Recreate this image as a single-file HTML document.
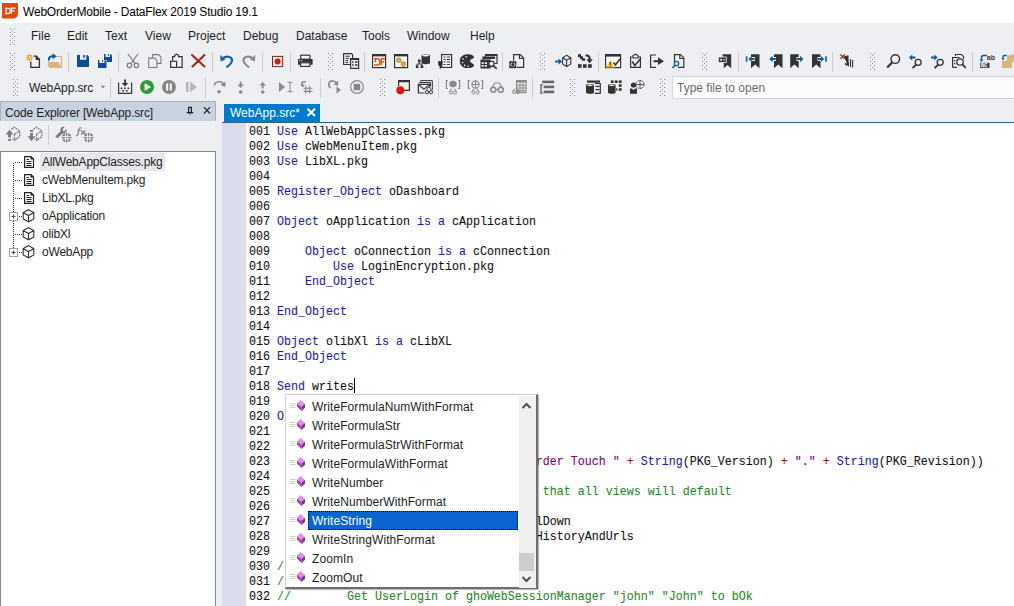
<!DOCTYPE html>
<html><head><meta charset="utf-8">
<style>
*{margin:0;padding:0;box-sizing:border-box}
html,body{width:1014px;height:606px;overflow:hidden;background:#eeeff3;font-family:"Liberation Sans",sans-serif;font-size:12px;color:#1e1e1e;position:relative}
.a{position:absolute}
.nw{white-space:nowrap}
#title{left:0;top:0;width:1014px;height:23px;background:#fff}
#title .t{left:23px;top:5px;font-size:12px;color:#000;letter-spacing:-0.2px}
.menu span{position:absolute;top:29px;font-size:12px;color:#1e1e1e;white-space:nowrap}
#combo{left:29px;top:81px;font-size:12px;color:#1e1e1e;white-space:nowrap;letter-spacing:-0.1px}
#cehdr{left:0;top:101px;width:216px;height:20px;background:#c9d3e0;border-top:1px solid #a8b0bc;border-right:1px solid #a8b0bc;border-left:1px solid #a8b0bc}
#cehdr .t{left:4px;top:4px;font-size:12px;color:#1e1e1e;letter-spacing:-0.15px}
#tree{left:0;top:151px;width:216px;height:460px;background:#fff;border:1px solid #838790}
.ti{position:absolute;left:42px;font-size:12px;color:#1e1e1e;white-space:nowrap;letter-spacing:-0.2px}
#tsel{left:40px;top:153px;width:125px;height:18px;background:#e8e8ec}
#tab{left:224px;top:104px;width:96px;height:18px;background:#007acc;color:#fff}
#tab .t{left:6px;top:2px;font-size:12px;white-space:nowrap}
#tabline{left:222px;top:122px;width:792px;height:1px;background:#2d6488}
#editor{left:222px;top:123px;width:792px;height:483px;background:#fff}
#gutter{left:222px;top:123px;width:24px;height:483px;background:#dadcec}
#code{left:249px;top:125px;font-family:"Liberation Mono",monospace;font-size:12.4px;line-height:15px;white-space:pre;color:#111;transform-origin:0 0;transform:scaleX(0.9409);-webkit-text-stroke:0.1px}
.k{color:#1e1ea0}.s{color:#800080}.c{color:#1f8a1f}.o{color:#a01010}
#caret{left:354px;top:378px;width:1px;height:15px;background:#000}
#popup{left:285px;top:394px;width:253px;height:195px;background:#fff;border:1px solid #d0d0d0;border-right:2px solid #6e6e6e;border-bottom:2px solid #6e6e6e;box-shadow:1px 1px 1px rgba(0,0,0,.25);z-index:5}
.pi{position:absolute;left:26px;font-size:12px;color:#1e1e1e;white-space:nowrap;letter-spacing:0.08px}
#sel{left:22px;top:116px;width:210px;height:19px;background:#0a64d2;border:1px dotted #000}
#sb{left:233px;top:1px;width:17px;height:192px;background:#f0f0f0}
#thumb{left:0px;top:157px;width:15px;height:18px;background:#cdcdcd}
#typebox{left:672px;top:76px;width:350px;height:23px;background:#fcfcfc;border:1px solid #d8d9de}
#typebox .t{left:4px;top:4px;color:#6d6d6d;font-size:12px}
</style></head><body>
<div id="title" class="a"><div class="t a nw">WebOrderMobile - DataFlex 2019 Studio 19.1</div></div>

<div class="menu">
<span style="left:31px">File</span>
<span style="left:67px">Edit</span>
<span style="left:105px">Text</span>
<span style="left:145px">View</span>
<span style="left:188px">Project</span>
<span style="left:243px">Debug</span>
<span style="left:296px">Database</span>
<span style="left:362px">Tools</span>
<span style="left:407px">Window</span>
<span style="left:470px">Help</span>
</div>
<div id="combo" class="a">WebApp.src</div>

<div id="cehdr" class="a"><div class="t a nw">Code Explorer [WebApp.src]</div></div>
<div id="tree" class="a"></div>
<div id="tsel" class="a"></div>
<div class="ti" style="top:155px">AllWebAppClasses.pkg</div>
<div class="ti" style="top:173px">cWebMenuItem.pkg</div>
<div class="ti" style="top:191px">LibXL.pkg</div>
<div class="ti" style="top:209px">oApplication</div>
<div class="ti" style="top:227px">olibXl</div>
<div class="ti" style="top:245px">oWebApp</div>

<div id="editor" class="a"></div>
<div id="gutter" class="a"></div>
<div id="tabline" class="a"></div>
<div id="tab" class="a"><div class="t a">WebApp.src*</div></div>

<div id="typebox" class="a"><div class="t a nw">Type file to open</div></div>

<div id="code" class="a">001 <span class="k">Use</span> AllWebAppClasses.pkg
002 <span class="k">Use</span> cWebMenuItem.pkg
003 <span class="k">Use</span> LibXL.pkg
004
005 <span class="k">Register_Object</span> oDashboard
006
007 <span class="k">Object</span> oApplication <span class="k">is a</span> cApplication
008
009     <span class="k">Object</span> oConnection <span class="k">is a</span> cConnection
010         <span class="k">Use</span> LoginEncryption.pkg
011     <span class="k">End_Object</span>
012
013 <span class="k">End_Object</span>
014
015 <span class="k">Object</span> olibXl <span class="k">is a</span> cLibXL
016 <span class="k">End_Object</span>
017
018 <span class="k">Send</span> writes
019
020 <span class="k">O</span>
021
022
023                                      <span class="s">rder Touch "</span> <span class="o">+</span> <span class="k">String</span>(PKG_Version) <span class="o">+</span> <span class="s">"."</span> <span class="o">+</span> <span class="k">String</span>(PKG_Revision))
024
025                                       <span class="c">that all views will default</span>
026
027                                      lDown
028                                      HistoryAndUrls
029
030 <span class="c">//</span>
031 <span class="c">//</span>
032 <span class="c">//        Get UserLogin of ghoWebSessionManager "john" "John" to bOk</span>
</div>
<div id="caret" class="a"></div>

<svg class="a" style="left:0;top:0" width="1014" height="606" viewBox="0 0 1014 606"><g fill="#8a8a8a"><rect x="10" y="53" width="1" height="1"/><rect x="14" y="53" width="1" height="1"/><rect x="12" y="55" width="1" height="1"/><rect x="10" y="57" width="1" height="1"/><rect x="14" y="57" width="1" height="1"/><rect x="12" y="59" width="1" height="1"/><rect x="10" y="61" width="1" height="1"/><rect x="14" y="61" width="1" height="1"/><rect x="12" y="63" width="1" height="1"/><rect x="10" y="65" width="1" height="1"/><rect x="14" y="65" width="1" height="1"/><rect x="12" y="67" width="1" height="1"/><rect x="10" y="69" width="1" height="1"/><rect x="14" y="69" width="1" height="1"/></g><g fill="#8a8a8a"><rect x="10" y="28" width="1" height="1"/><rect x="14" y="28" width="1" height="1"/><rect x="12" y="30" width="1" height="1"/><rect x="10" y="32" width="1" height="1"/><rect x="14" y="32" width="1" height="1"/><rect x="12" y="34" width="1" height="1"/><rect x="10" y="36" width="1" height="1"/><rect x="14" y="36" width="1" height="1"/><rect x="12" y="38" width="1" height="1"/><rect x="10" y="40" width="1" height="1"/><rect x="14" y="40" width="1" height="1"/><rect x="12" y="42" width="1" height="1"/><rect x="10" y="44" width="1" height="1"/><rect x="14" y="44" width="1" height="1"/></g><rect x="68" y="52" width="1" height="20" fill="#ccced3"/><rect x="118" y="52" width="1" height="20" fill="#ccced3"/><rect x="212" y="52" width="1" height="20" fill="#ccced3"/><rect x="262" y="52" width="1" height="20" fill="#ccced3"/><rect x="290" y="52" width="1" height="20" fill="#ccced3"/><rect x="364" y="52" width="1" height="20" fill="#ccced3"/><rect x="502" y="52" width="1" height="20" fill="#ccced3"/><rect x="598" y="52" width="1" height="20" fill="#ccced3"/><rect x="738" y="52" width="1" height="20" fill="#ccced3"/><rect x="832" y="52" width="1" height="20" fill="#ccced3"/><rect x="972" y="52" width="1" height="20" fill="#ccced3"/><g fill="#8a8a8a"><rect x="328" y="53" width="1" height="1"/><rect x="332" y="53" width="1" height="1"/><rect x="330" y="55" width="1" height="1"/><rect x="328" y="57" width="1" height="1"/><rect x="332" y="57" width="1" height="1"/><rect x="330" y="59" width="1" height="1"/><rect x="328" y="61" width="1" height="1"/><rect x="332" y="61" width="1" height="1"/><rect x="330" y="63" width="1" height="1"/><rect x="328" y="65" width="1" height="1"/><rect x="332" y="65" width="1" height="1"/><rect x="330" y="67" width="1" height="1"/><rect x="328" y="69" width="1" height="1"/><rect x="332" y="69" width="1" height="1"/></g><g fill="#8a8a8a"><rect x="540" y="53" width="1" height="1"/><rect x="544" y="53" width="1" height="1"/><rect x="542" y="55" width="1" height="1"/><rect x="540" y="57" width="1" height="1"/><rect x="544" y="57" width="1" height="1"/><rect x="542" y="59" width="1" height="1"/><rect x="540" y="61" width="1" height="1"/><rect x="544" y="61" width="1" height="1"/><rect x="542" y="63" width="1" height="1"/><rect x="540" y="65" width="1" height="1"/><rect x="544" y="65" width="1" height="1"/><rect x="542" y="67" width="1" height="1"/><rect x="540" y="69" width="1" height="1"/><rect x="544" y="69" width="1" height="1"/></g><g fill="#8a8a8a"><rect x="702" y="53" width="1" height="1"/><rect x="706" y="53" width="1" height="1"/><rect x="704" y="55" width="1" height="1"/><rect x="702" y="57" width="1" height="1"/><rect x="706" y="57" width="1" height="1"/><rect x="704" y="59" width="1" height="1"/><rect x="702" y="61" width="1" height="1"/><rect x="706" y="61" width="1" height="1"/><rect x="704" y="63" width="1" height="1"/><rect x="702" y="65" width="1" height="1"/><rect x="706" y="65" width="1" height="1"/><rect x="704" y="67" width="1" height="1"/><rect x="702" y="69" width="1" height="1"/><rect x="706" y="69" width="1" height="1"/></g><g fill="#8a8a8a"><rect x="870" y="53" width="1" height="1"/><rect x="874" y="53" width="1" height="1"/><rect x="872" y="55" width="1" height="1"/><rect x="870" y="57" width="1" height="1"/><rect x="874" y="57" width="1" height="1"/><rect x="872" y="59" width="1" height="1"/><rect x="870" y="61" width="1" height="1"/><rect x="874" y="61" width="1" height="1"/><rect x="872" y="63" width="1" height="1"/><rect x="870" y="65" width="1" height="1"/><rect x="874" y="65" width="1" height="1"/><rect x="872" y="67" width="1" height="1"/><rect x="870" y="69" width="1" height="1"/><rect x="874" y="69" width="1" height="1"/></g><g stroke="#e39a1f" stroke-width="1.1"><path d="M29.5 54v7M26 57.5h7M27 55l5 5M32 55l-5 5"/></g><circle cx="29.5" cy="57.5" r="1.4" fill="#fff" stroke="#e39a1f"/><path d="M30.8 61.5V67.4H39.4V59.2L36.4 56.2H33.5" fill="none" stroke="#333" stroke-width="1.3"/><path d="M35.7 55.6L40 59.9H35.7Z" fill="#333"/><path d="M56 56.5H61.5V67.5" fill="none" stroke="#d9b57a" stroke-width="1.2"/><path d="M48 62H58.5L62 68H49.5Z" fill="#d9b57a"/><path d="M48.5 67V61" stroke="#d9b57a" stroke-width="1"/><path d="M49.3 60.5C48 57.5 50 56 53.5 56.2" fill="none" stroke="#0e5aa0" stroke-width="2"/><path d="M52.5 53.2L56.8 56.2L52.5 59.2Z" fill="#0e5aa0"/><path d="M77 55H80V59.7H86.3V55H87.2L89 56.8V67H77Z" fill="#0b4c94"/><rect x="83.2" y="55" width="1.6" height="2.8" fill="#0b4c94"/><path d="M98 60H99.4V63H104.5V60H105L106.5 61.5V68H98Z" fill="#0b4c94"/><rect x="102" y="60" width="1" height="2" fill="#0b4c94"/><path d="M104 54H105.5V57H110V54H110.5L112 55.5V62H106.8V60H104Z" fill="#0b4c94"/><rect x="107.8" y="54" width="1" height="2" fill="#0b4c94"/><g fill="none" stroke="#7c7c7c" stroke-width="1.2"><circle cx="129.4" cy="65.4" r="2.2"/><circle cx="136.4" cy="65.4" r="2.2"/><path d="M128 54L135 63.4M138 54L131 63.4"/></g><g fill="none" stroke="#7c7c7c" stroke-width="1.1"><path d="M152.6 57.5V54.6H158.6L161 57V63.4H157"/><path d="M148.7 58.1H154.6L156.9 60.4V67.5H148.7Z" fill="#eeeff3"/></g><g fill="none" stroke="#333" stroke-width="1.2"><path d="M172.6 60.5V56.7H174.6V55.3L176.6 54.2L178.6 55.3V56.7H182.1V67.4H177.5"/><rect x="170.6" y="61.3" width="6" height="6.1" fill="#eeeff3"/></g><g stroke="#a3270f" stroke-width="2.1" stroke-linecap="round"><path d="M192 55L204.5 66.5M204.5 55L192.5 66.5"/></g><path d="M222 58.6C226 55.8 231.5 56 232 60C232.4 63 229.5 65 226.5 67.3" fill="none" stroke="#1a5ea8" stroke-width="2.2"/><path d="M220.2 55L220.6 61.5L225.6 59.4Z" fill="#1a5ea8"/><path d="M253.5 58.6C249.5 55.8 244 56 243.5 60C243.1 63 246 65 249 67.3" fill="none" stroke="#8a8a8a" stroke-width="2.2"/><path d="M255.3 55L254.9 61.5L249.9 59.4Z" fill="#8a8a8a"/><rect x="272.5" y="56.4" width="10.2" height="10.2" fill="#fbe5df" stroke="#7a2a1a" stroke-width="1"/><circle cx="277.6" cy="61.5" r="3" fill="#b02a10"/><rect x="300.7" y="55.2" width="9.2" height="4" fill="#fff" stroke="#333" stroke-width="1.2"/><path d="M298 59H312.6V64.8H310.2V62.4H300.4V64.8H298Z" fill="#333"/><rect x="300.7" y="62.8" width="9.2" height="3.6" fill="#fff" stroke="#333" stroke-width="1.2"/><rect x="299.2" y="60.2" width="1.2" height="1" fill="#fff"/><rect x="301.2" y="60.2" width="1.2" height="1" fill="#fff"/><g fill="none" stroke="#333" stroke-width="1.2"><path d="M350 64.5H343.6V53.6H351.5L352.6 54.7V58"/><path d="M345.5 56.2H350M345.5 58.4H349M345.5 60.6H348M345.5 62.6H348" stroke-width="1"/></g><rect x="350.6" y="58.6" width="8" height="9.8" fill="#eeeff3" stroke="#333" stroke-width="1.2"/><rect x="350" y="58" width="9" height="2" fill="#333"/><path d="M352 62h1.5M355 62h2.5M352 65h1.5M355 65h2.5" stroke="#333" stroke-width="1.6"/><rect x="372.6" y="54.6" width="13" height="13" fill="#fff" stroke="#333" stroke-width="1.2"/><rect x="372" y="54" width="14" height="2.4" fill="#333"/><path d="M374 58.8H377.6C379.3 58.8 379.9 60 379.9 61.9C379.9 63.8 379.3 65 377.6 65H374M375.4 58.8V62.5" fill="none" stroke="#d9531e" stroke-width="1.5"/><path d="M381.3 65.5V58.8H385M381.3 61.9H384.2" fill="none" stroke="#d9531e" stroke-width="1.5"/><rect x="394.6" y="54.6" width="13" height="13" fill="#fff" stroke="#333" stroke-width="1.2"/><rect x="394" y="54" width="14" height="2.4" fill="#333"/><circle cx="398.8" cy="60.2" r="2.4" fill="#c9922e" stroke="#c9922e" stroke-width="1.2" stroke-dasharray="1 .9"/><circle cx="403.4" cy="64" r="2.4" fill="#c9922e" stroke="#c9922e" stroke-width="1.2" stroke-dasharray="1 .9"/><circle cx="398.8" cy="60.2" r=".8" fill="#fff"/><circle cx="403.4" cy="64" r=".8" fill="#fff"/><path d="M421.5 55.5C421.5 54 430 54 430 55.5V63C430 64.5 421.5 64.5 421.5 63Z" fill="#333"/><ellipse cx="425.7" cy="55.6" rx="3.3" ry=".9" fill="#fff"/><g fill="#333"><rect x="418" y="59.5" width="2.6" height="2.6"/><rect x="415.8" y="65.4" width="2.6" height="2.6"/><rect x="420.6" y="65.4" width="2.6" height="2.6"/></g><path d="M419.3 62V64H417.1V66M419.3 64H421.9V66" fill="none" stroke="#333" stroke-width="1"/><rect x="441.6" y="54.6" width="10" height="12.8" fill="#fff" stroke="#333" stroke-width="1.2"/><path d="M443.5 57h2.2M447 57h3M443.5 59.5h2.2M447 59.5h3M443.5 62h2.2M447 62h3M443.5 64.5h2.2M447 64.5h3" stroke="#333" stroke-width="1.2"/><path d="M438.2 61H442.5V64.5C442.5 65.5 441.5 66 441 66V68.5H439.6V66C439 66 438.2 65.5 438.2 64.5Z" fill="#333"/><path d="M467 54.2C471 54 474.2 55.5 474 57.3C473.8 59 470 59 470 61C470 63 474.2 63.5 474 65.5C473.6 67.8 469 68.3 466 68C462 67.5 459.8 64.5 459.8 61C459.8 57 463 54.4 467 54.2Z" fill="#333"/><g fill="#fff"><circle cx="463" cy="59" r=".8"/><circle cx="466.2" cy="56.8" r=".8"/><circle cx="462.6" cy="62.5" r=".8"/><circle cx="464.6" cy="65.4" r=".8"/><circle cx="468" cy="66.2" r=".8"/></g><path d="M485.5 57V54.5H497V63.5H494.5" fill="none" stroke="#333" stroke-width="1.2"/><rect x="485" y="54" width="12" height="2" fill="#333"/><path d="M483 59.5V57H494.5V59" fill="none" stroke="#333" stroke-width="1.2"/><rect x="483" y="57" width="11" height="2" fill="#333"/><rect x="480.5" y="59.5" width="10" height="9" fill="#333"/><g fill="#fff"><rect x="481.6" y="62.3" width="2.2" height="1.6"/><rect x="484.8" y="62.3" width="2.2" height="1.6"/><rect x="481.6" y="65" width="2.2" height="1.6"/><rect x="484.8" y="65" width="2.2" height="1.6"/></g><circle cx="491.5" cy="63.8" r="2.7" fill="#eeeff3" stroke="#333" stroke-width="1.3"/><path d="M493.5 65.8L496.8 68.8" stroke="#333" stroke-width="1.6"/><path d="M513.6 60.5V54.6H520.2L523.6 58V67.4H517" fill="none" stroke="#333" stroke-width="1.2"/><path d="M519.5 54.6V58.5H523.6" fill="none" stroke="#333" stroke-width="1.2"/><rect x="509.3" y="61.2" width="7" height="7" fill="#333"/><path d="M512 62.8L510.5 64.7L512 66.6M513.7 62.8L515.2 64.7L513.7 66.6" fill="none" stroke="#fff" stroke-width=".9"/><path d="M555 61.5H559.5" stroke="#0e5aa0" stroke-width="1.8"/><path d="M558.5 58.6L562.2 61.5L558.5 64.4Z" fill="#0e5aa0"/><path d="M566.6 55.3L570.8 57.7V63.9L566.6 66.7L562.6 63.9V57.7ZM562.8 57.8L566.6 60.2L570.6 57.8M566.6 60.2V66.5" fill="none" stroke="#333" stroke-width="1.1"/><g fill="#333"><rect x="578" y="54.2" width="3" height="3"/><rect x="580" y="56.2" width="3" height="3"/><rect x="582" y="58.2" width="3" height="2.6"/><rect x="578" y="64.2" width="3.6" height="3.6"/><rect x="583" y="64.2" width="3.6" height="3.6"/><rect x="588" y="64.2" width="3.8" height="3.6"/></g><path d="M585.5 55.5H587C589 55.5 589.6 57 589.6 59V60.5" fill="none" stroke="#333" stroke-width="2"/><path d="M586.3 59.3L589.6 63.3L592.8 59.3Z" fill="#333"/><rect x="605.6" y="55.6" width="15" height="12" fill="#fff" stroke="#333" stroke-width="1.2"/><rect x="605" y="54" width="16" height="2.5" fill="#333"/><path d="M606 67.5L610.3 59.8L614.6 67.5Z" fill="#f4c020"/><rect x="609.8" y="62" width="1" height="3" fill="#333"/><rect x="609.8" y="65.8" width="1" height="1" fill="#333"/><path d="M613.5 62.5L615.5 65L620 58.8" fill="none" stroke="#333" stroke-width="1.6"/><path d="M632.8 57H630.6V67.4H640.4V57H638.2" fill="none" stroke="#333" stroke-width="1.2"/><path d="M633 58V55.5L635.5 54.2L638 55.5V58Z" fill="none" stroke="#333" stroke-width="1.1"/><path d="M632.3 61.5L634.8 65.5L640.8 58.5" fill="none" stroke="#333" stroke-width="1.6"/><path d="M656 55H650.6V67.4H656" fill="none" stroke="#333" stroke-width="1.2"/><path d="M653.5 61.2H659" stroke="#333" stroke-width="2"/><path d="M658 57.3L664 61.2L658 65.1Z" fill="#333"/><path d="M674.5 62V54.6H680.5L683.8 57.9V67.4H678" fill="none" stroke="#333" stroke-width="1.2"/><path d="M679.8 54.6V58.5H683.8" fill="none" stroke="#333" stroke-width="1.1"/><circle cx="676.5" cy="63.5" r="2.2" fill="#eeeff3" stroke="#0e5aa0" stroke-width="1.3"/><path d="M675 65.2L672.4 68" stroke="#0e5aa0" stroke-width="1.5"/><path d="M722.5 54.2H731.2V68.2L727.5 65L723.8 68.2V64" fill="#333"/><rect x="718.3" y="57" width="8" height="5.5" fill="#333" stroke="#eeeff3" stroke-width=".8"/><path d="M719.8 59.8H722.2M721 58.6V61M723 59.8H725.2" stroke="#fff" stroke-width=".9"/><path d="M751 54.2H759.5V68.2L755.2 64.6L751 68.2Z" fill="#333"/><rect x="745.8" y="56.3" width="1.6" height="5.5" fill="#0e5aa0"/><path d="M748.5 59H755" stroke="#eeeff3" stroke-width="4"/><path d="M749.8 59H754.6" stroke="#0e5aa0" stroke-width="2"/><path d="M748.4 59L751.6 56V62Z" fill="#0e5aa0"/><path d="M774 54.2H782.5V68.2L778.2 64.6L774 68.2Z" fill="#333"/><path d="M769.5 59H776" stroke="#eeeff3" stroke-width="4"/><path d="M771 59H775.8" stroke="#0e5aa0" stroke-width="2"/><path d="M769.2 59L772.6 55.8V62.2Z" fill="#0e5aa0"/><path d="M790.2 54.2H798.7V68.2L794.4000000000001 64.6L790.2 68.2Z" fill="#333"/><path d="M796.5 59H803" stroke="#eeeff3" stroke-width="4"/><path d="M796.7 59H801.3" stroke="#0e5aa0" stroke-width="2"/><path d="M803.4 59L800 55.8V62.2Z" fill="#0e5aa0"/><path d="M812 54.2H820.5V68.2L816.2 64.6L812 68.2Z" fill="#333"/><path d="M817.5 59H824" stroke="#eeeff3" stroke-width="4"/><path d="M818 59H822.5" stroke="#0e5aa0" stroke-width="2"/><path d="M824.2 59L821 56V62Z" fill="#0e5aa0"/><rect x="825.2" y="56.3" width="1.6" height="5.5" fill="#0e5aa0"/><path d="M843.5 56.5L847.2 55.5H848.5V62.5L846 61Z" fill="#333"/><path d="M846 58.5L849 62.5V66.5L846.5 64.5Z" fill="#333"/><path d="M850.5 59V67M852.6 60V67.5" stroke="#333" stroke-width="1.1"/><path d="M840.4 54.5L845 58.8M845 54.5L840.4 58.8" stroke="#b0301c" stroke-width="1.3"/><path d="M845 63.5L847 65.5" stroke="#333" stroke-width="1.3"/><circle cx="895.3" cy="59.1" r="4.3" fill="none" stroke="#333" stroke-width="1.4"/><path d="M892.1 62.4L887.2 67.5" stroke="#333" stroke-width="2.2"/><circle cx="918.2" cy="62.3" r="3" fill="none" stroke="#333" stroke-width="1.3"/><path d="M916.1 64.6L912.6 68.2" stroke="#333" stroke-width="1.9"/><path d="M911 57.5H915.5" stroke="#0e5aa0" stroke-width="2"/><path d="M909 57.5L912.2 54.5V60.5Z" fill="#0e5aa0"/><circle cx="940.2" cy="62.3" r="3" fill="none" stroke="#333" stroke-width="1.3"/><path d="M938.1 64.6L934.6 68.2" stroke="#333" stroke-width="1.9"/><path d="M931 57.5H935.5" stroke="#0e5aa0" stroke-width="2"/><path d="M937.6 57.5L934.4 54.5V60.5Z" fill="#0e5aa0"/><path d="M955.5 56V54.5H961.5L963.5 56.5V59" fill="none" stroke="#333" stroke-width="1.1"/><path d="M952.6 67.4V57.5H959.5" fill="none" stroke="#333" stroke-width="1.2"/><path d="M952.6 67.4H957" stroke="#333" stroke-width="1.2"/><g fill="#333"><rect x="954" y="60" width="1.3" height="1.3"/><rect x="954" y="63" width="1.3" height="1.3"/></g><circle cx="960" cy="62" r="3.2" fill="#eeeff3" stroke="#333" stroke-width="1.3"/><path d="M962.3 64.4L965.8 67.8" stroke="#333" stroke-width="1.7"/><path d="M987 55.5H983.5C982 55.5 981.5 56.5 981.5 58V60" fill="none" stroke="#0e5aa0" stroke-width="1.5"/><path d="M979.6 59.5L981.5 62L983.4 59.5Z" fill="#0e5aa0"/><text x="986.8" y="59.8" font-family="Liberation Sans" font-weight="bold" font-size="7" fill="#333">ab</text><rect x="980" y="62.8" width="9.5" height="5" fill="#333"/><text x="980.5" y="67.2" font-family="Liberation Sans" font-weight="bold" font-size="6.5" fill="#fff">ac</text><path d="M1007 57.5V55.5H1010L1011 54.5H1014V62H1007Z" fill="#d9b57a"/><path d="M1002 68V61H1006L1007 60H1012V68Z" fill="#d9b57a"/><path d="M1006.8 55.5H1004.5C1003.5 55.5 1003 56 1003 57V58.5" fill="none" stroke="#0e5aa0" stroke-width="1.4"/><path d="M1001.3 58.2L1003 60.5L1004.7 58.2Z" fill="#0e5aa0"/><g fill="#8a8a8a"><rect x="13" y="79" width="1" height="1"/><rect x="17" y="79" width="1" height="1"/><rect x="15" y="81" width="1" height="1"/><rect x="13" y="83" width="1" height="1"/><rect x="17" y="83" width="1" height="1"/><rect x="15" y="85" width="1" height="1"/><rect x="13" y="87" width="1" height="1"/><rect x="17" y="87" width="1" height="1"/><rect x="15" y="89" width="1" height="1"/><rect x="13" y="91" width="1" height="1"/><rect x="17" y="91" width="1" height="1"/><rect x="15" y="93" width="1" height="1"/><rect x="13" y="95" width="1" height="1"/><rect x="17" y="95" width="1" height="1"/></g><rect x="110" y="78" width="1" height="20" fill="#ccced3"/><rect x="205" y="78" width="1" height="20" fill="#ccced3"/><rect x="320" y="78" width="1" height="20" fill="#ccced3"/><rect x="438" y="78" width="1" height="20" fill="#ccced3"/><rect x="532" y="78" width="1" height="20" fill="#ccced3"/><g fill="#8a8a8a"><rect x="380" y="79" width="1" height="1"/><rect x="384" y="79" width="1" height="1"/><rect x="382" y="81" width="1" height="1"/><rect x="380" y="83" width="1" height="1"/><rect x="384" y="83" width="1" height="1"/><rect x="382" y="85" width="1" height="1"/><rect x="380" y="87" width="1" height="1"/><rect x="384" y="87" width="1" height="1"/><rect x="382" y="89" width="1" height="1"/><rect x="380" y="91" width="1" height="1"/><rect x="384" y="91" width="1" height="1"/><rect x="382" y="93" width="1" height="1"/><rect x="380" y="95" width="1" height="1"/><rect x="384" y="95" width="1" height="1"/></g><g fill="#8a8a8a"><rect x="570" y="79" width="1" height="1"/><rect x="574" y="79" width="1" height="1"/><rect x="572" y="81" width="1" height="1"/><rect x="570" y="83" width="1" height="1"/><rect x="574" y="83" width="1" height="1"/><rect x="572" y="85" width="1" height="1"/><rect x="570" y="87" width="1" height="1"/><rect x="574" y="87" width="1" height="1"/><rect x="572" y="89" width="1" height="1"/><rect x="570" y="91" width="1" height="1"/><rect x="574" y="91" width="1" height="1"/><rect x="572" y="93" width="1" height="1"/><rect x="570" y="95" width="1" height="1"/><rect x="574" y="95" width="1" height="1"/></g><g fill="#8a8a8a"><rect x="660" y="79" width="1" height="1"/><rect x="664" y="79" width="1" height="1"/><rect x="662" y="81" width="1" height="1"/><rect x="660" y="83" width="1" height="1"/><rect x="664" y="83" width="1" height="1"/><rect x="662" y="85" width="1" height="1"/><rect x="660" y="87" width="1" height="1"/><rect x="664" y="87" width="1" height="1"/><rect x="662" y="89" width="1" height="1"/><rect x="660" y="91" width="1" height="1"/><rect x="664" y="91" width="1" height="1"/><rect x="662" y="93" width="1" height="1"/><rect x="660" y="95" width="1" height="1"/><rect x="664" y="95" width="1" height="1"/></g><path d="M100.5 85.8H105.5L103 88.3Z" fill="#8a8a8a"/><path d="M118.6 82.5V93.4H131.6V82.5" fill="none" stroke="#333" stroke-width="1.2"/><path d="M125 79.5V85" stroke="#333" stroke-width="1.8"/><path d="M121.8 83L125 86.5L128.2 83Z" fill="#333"/><g fill="#333"><rect x="120.8" y="87.5" width="1.6" height="1.6"/><rect x="124.2" y="87.5" width="1.6" height="1.6"/><rect x="127.6" y="87.5" width="1.6" height="1.6"/><rect x="122.5" y="90" width="1.6" height="1.6"/><rect x="126" y="90" width="1.6" height="1.6"/></g><circle cx="147" cy="87" r="7" fill="#2f9a3a"/><path d="M144.6 83.2L151.2 87L144.6 90.8Z" fill="#fff"/><circle cx="169" cy="87" r="7" fill="#858585"/><rect x="166.2" y="83.5" width="2" height="7" fill="#fff"/><rect x="169.8" y="83.5" width="2" height="7" fill="#fff"/><rect x="186" y="82" width="2.5" height="10" fill="#b8b8b8"/><path d="M190 81.5L197 87L190 92.5Z" fill="#b8b8b8"/><path d="M214.3 85.5C215 81 222 80.5 223.6 84.5" fill="none" stroke="#8a8a8a" stroke-width="1.6"/><path d="M225.5 81.5L225.3 87L220.6 85Z" fill="#8a8a8a"/><circle cx="219" cy="91.8" r="1.8" fill="#8a8a8a"/><path d="M240.7 81.5V86" stroke="#8a8a8a" stroke-width="1.8"/><path d="M237.5 84.5L240.7 88L243.9 84.5Z" fill="#8a8a8a"/><circle cx="240.7" cy="92" r="1.8" fill="#8a8a8a"/><path d="M262.7 84V88.5" stroke="#8a8a8a" stroke-width="1.8"/><path d="M259.5 85.5L262.7 82L265.9 85.5Z" fill="#8a8a8a"/><circle cx="262.7" cy="92" r="1.8" fill="#8a8a8a"/><path d="M279 82L285 87L279 92Z" fill="#8a8a8a"/><path d="M287.5 82.3H292.5M290 82.3V91.7M287.5 91.7H292.5" fill="none" stroke="#8a8a8a" stroke-width="1"/><path d="M306 82C302 80.8 300.5 83.5 302.5 86" fill="none" stroke="#8a8a8a" stroke-width="1.6"/><path d="M300.5 84.5L302.8 87.5L305 84.5Z" fill="#8a8a8a"/><path d="M305.8 86V93.6M309.5 86V93.6M303.8 88.2H312.4M303.8 91.4H312.4" stroke="#8a8a8a" stroke-width="1.1"/><path d="M330.5 88C327 85 329 80 333.5 81C335.5 81.5 336.5 82.5 337 84" fill="none" stroke="#8a8a8a" stroke-width="1.6"/><path d="M338.3 80.8L338 86L333.8 84.2Z" fill="#8a8a8a"/><path d="M336.5 86.5L341 90L336.5 93.5Z" fill="#8a8a8a"/><circle cx="357" cy="87" r="6.4" fill="none" stroke="#8a8a8a" stroke-width="1.2"/><rect x="353.8" y="83.8" width="6.4" height="6.4" fill="#858585"/><path d="M398.6 86V80.6H409.4V90.4H403" fill="none" stroke="#333" stroke-width="1.2"/><rect x="398" y="80" width="12" height="2.2" fill="#333"/><circle cx="400.3" cy="90.3" r="4" fill="#e0140a"/><path d="M420.5 81.5V80.6H432.3V90" fill="none" stroke="#333" stroke-width="1"/><path d="M419.5 83V82.5H430.5V86" fill="none" stroke="#333" stroke-width="1"/><path d="M424.5 93H418.4V84.4H429.6V87.5" fill="none" stroke="#333" stroke-width="1.2"/><path d="M418.6 84.6L424 89.2L429.4 84.6" fill="none" stroke="#333" stroke-width="1.1"/><circle cx="427" cy="92.2" r="1.6" fill="none" stroke="#333" stroke-width="1"/><circle cx="431" cy="92.2" r="1.6" fill="none" stroke="#333" stroke-width="1"/><path d="M426.5 90.5L428 87.5L429.8 87.5L431.5 90.5" fill="none" stroke="#333" stroke-width=".9"/><path d="M448 80.5H446.4V88.5H448M458 80.5H459.6V88.5H458" fill="none" stroke="#8a8a8a" stroke-width="1.2"/><path d="M449.5 82L453 80.5L456.5 82V86L453 87.5L449.5 86Z" fill="#8a8a8a"/><circle cx="450.93" cy="92.5" r="1.53" fill="none" stroke="#8a8a8a" stroke-width="1"/><circle cx="455.07" cy="92.5" r="1.53" fill="none" stroke="#8a8a8a" stroke-width="1"/><path d="M449.58 91.5L451.65 88.45M456.42 91.5L454.35 88.45" stroke="#8a8a8a" stroke-width="1"/><path d="M470 80.5H468.4V88.5H470M481 80.5H482.6V88.5H481" fill="none" stroke="#8a8a8a" stroke-width="1.2"/><circle cx="475.5" cy="84.5" r="3.6" fill="none" stroke="#8a8a8a" stroke-width="1.1"/><path d="M475.5 81V88M472 84.5H479" stroke="#8a8a8a" stroke-width="1"/><circle cx="473.43" cy="92.5" r="1.53" fill="none" stroke="#8a8a8a" stroke-width="1"/><circle cx="477.57" cy="92.5" r="1.53" fill="none" stroke="#8a8a8a" stroke-width="1"/><path d="M472.08 91.5L474.15 88.45M478.92 91.5L476.85 88.45" stroke="#8a8a8a" stroke-width="1"/><circle cx="493.3" cy="89.8" r="2.5" fill="none" stroke="#8a8a8a" stroke-width="1.4"/><circle cx="500.8" cy="89.8" r="2.5" fill="none" stroke="#8a8a8a" stroke-width="1.4"/><path d="M490.9 89.3L494.8 83H499.3L503.2 89.3M495.8 89.5H498.3" fill="none" stroke="#8a8a8a" stroke-width="1.2"/><rect x="516.6" y="80.6" width="9.4" height="12" fill="none" stroke="#8a8a8a" stroke-width="1.2"/><rect x="516" y="80" width="10.6" height="2.5" fill="#8a8a8a"/><path d="M516.5 85.3H526M516.5 88H526M516.5 90.7H526M520 82.5V92.6M523 82.5V92.6" stroke="#8a8a8a" stroke-width="1"/><circle cx="514.045" cy="92.2" r="1.4449999999999998" fill="none" stroke="#8a8a8a" stroke-width="1"/><circle cx="517.955" cy="92.2" r="1.4449999999999998" fill="none" stroke="#8a8a8a" stroke-width="1"/><path d="M512.77 91.2L514.725 88.375M519.23 91.2L517.275 88.375" stroke="#8a8a8a" stroke-width="1"/><g fill="#666"><rect x="542.2" y="80.6" width="12" height="2.6"/><rect x="543.6" y="85.6" width="10.6" height="2.6"/><rect x="543.6" y="90.6" width="10.6" height="2.6"/></g><path d="M542.6 84.8H541V93.2H542.6" fill="none" stroke="#666" stroke-width="1.4"/><rect x="587" y="80.5" width="13" height="2.2" fill="#333"/><path d="M594.8 83.5H600.3V93.3H594.8" fill="none" stroke="#333" stroke-width="1.2"/><path d="M595.5 86.3H599.5M595.5 89.6H599.5" stroke="#333" stroke-width="1.2"/><path d="M586 85C586 83.5 594 83.5 594 85V92.5C594 94.2 586 94.2 586 92.5Z" fill="#333"/><ellipse cx="590" cy="85.3" rx="3" ry=".8" fill="#fff"/><g fill="#333"><rect x="610.8" y="80.4" width="2.8" height="2.6"/><rect x="614.8" y="80.4" width="2.8" height="2.6"/><rect x="618.8" y="80.4" width="2.8" height="2.6"/><rect x="618.8" y="84.2" width="2.8" height="2.6"/><rect x="618.8" y="88.2" width="2.8" height="2.6"/><rect x="616.2" y="88.2" width="1.2" height="2.6"/></g><path d="M608 85C608 83.5 615.6 83.5 615.6 85V92.5C615.6 94.2 608 94.2 608 92.5Z" fill="#333"/><ellipse cx="611.8" cy="85.3" rx="2.8" ry=".8" fill="#fff"/><circle cx="633.5" cy="85" r="2.6" fill="#333"/><path d="M630 88.5H631.5L633.5 90L635.5 88.5H637V93.8H630Z" fill="#333"/><circle cx="640" cy="84.5" r="4" fill="none" stroke="#333" stroke-width="1" stroke-dasharray="1.5 .8"/><path d="M640 80.5V88.5M636.3 84.5H643.7" stroke="#333" stroke-width=".8"/><path d="M2 3H18V13.5C18 16.5 16 18.6 13 18.6H2Z" fill="#e2470f"/><path d="M4.8 8.2H8C9.6 8.2 10.2 9.3 10.2 10.9C10.2 12.5 9.6 13.6 8 13.6H4.8M6.2 8.2V13.6" fill="none" stroke="#fff" stroke-width="1.1"/><path d="M11.2 14V8.2H15.5M11.2 10.9H14.6" fill="none" stroke="#fff" stroke-width="1.2"/><path d="M188.6 107.4V112.4M191.4 107.4V112.4M188.2 107.4H191.8" fill="none" stroke="#111" stroke-width="1.1"/><path d="M186.8 112.6H193.2" stroke="#111" stroke-width="1.3"/><path d="M190 113V115" stroke="#444" stroke-width="1"/><path d="M204 107.2L210 113.5M210 107.2L204 113.5" stroke="#222" stroke-width="1.2"/><path d="M307.5 108.8L315 116M315 108.8L307.5 116" stroke="#fff" stroke-width="2"/><path d="M11.1 129.3L14.5 127.3L19.7 131.0V136.6L14.5 140.5M14.5 134.3L19.7 131.0M14.5 134.3V140.5" fill="none" stroke="#7a7a7a" stroke-width="1.2" stroke-dasharray="2 .7"/><path d="M12.5 138.5L14.5 140.8L16.5 138.5" fill="none" stroke="#7a7a7a" stroke-width="1"/><path d="M9.5 129.8L5.6 134.6H8.1V137.6H10.9V134.6H13.4Z" fill="#7a7a7a"/><rect x="8" y="139" width="3.2" height="1.8" fill="#7a7a7a"/><path d="M33.2 129.3L36.6 127.3L41.800000000000004 131.0V136.6L36.6 140.5M36.6 134.3L41.800000000000004 131.0M36.6 134.3V140.5" fill="none" stroke="#7a7a7a" stroke-width="1.2" stroke-dasharray="2 .7"/><path d="M34.6 138.5L36.6 140.8L38.6 138.5" fill="none" stroke="#7a7a7a" stroke-width="1"/><rect x="29.9" y="130" width="3.2" height="1.8" fill="#7a7a7a"/><path d="M30.1 133H32.9V136.2H35.4L31.5 141.2L27.6 136.2H30.1Z" fill="#7a7a7a"/><rect x="48" y="125" width="1" height="20" fill="#ccced3"/><path d="M55.5 136.2L60.6 131.3C59.8 128.6 61.6 126.6 64.6 126.9L62.7 129.1L64.6 131L66.6 129.1C67.2 132 65 134 62.4 133.4L57.4 138.4Z" fill="#7a7a7a"/><circle cx="63.8" cy="130.2" r="1" fill="#eeeff3"/><circle cx="66.6" cy="137.6" r="4.8" fill="#7a7a7a"/><path d="M61.5 136.4H71.6M61.5 138.8H71.6M65.4 132.5V142.7M67.8 132.5V142.7" stroke="#eeeff3" stroke-width="1"/><path d="M81.5 128.2C80 127.3 79 128 78.8 129.5L77.8 134.3C77.5 135.8 76.6 136 76 135.3M77.6 130.5H80.5M81 130.5L85.5 134.5M85.5 130.5L81 134.5" fill="none" stroke="#7a7a7a" stroke-width="1.1"/><circle cx="88.6" cy="137.6" r="4.8" fill="#7a7a7a"/><path d="M83.5 136.4H93.6M83.5 138.8H93.6M87.4 132.5V142.7M89.8 132.5V142.7" stroke="#eeeff3" stroke-width="1"/><g fill="#333"><rect x="13" y="163" width="1" height="1"/><rect x="13" y="165" width="1" height="1"/><rect x="13" y="167" width="1" height="1"/><rect x="13" y="169" width="1" height="1"/><rect x="13" y="171" width="1" height="1"/><rect x="13" y="173" width="1" height="1"/><rect x="13" y="175" width="1" height="1"/><rect x="13" y="177" width="1" height="1"/><rect x="13" y="179" width="1" height="1"/><rect x="13" y="181" width="1" height="1"/><rect x="13" y="183" width="1" height="1"/><rect x="13" y="185" width="1" height="1"/><rect x="13" y="187" width="1" height="1"/><rect x="13" y="189" width="1" height="1"/><rect x="13" y="191" width="1" height="1"/><rect x="13" y="193" width="1" height="1"/><rect x="13" y="195" width="1" height="1"/><rect x="13" y="197" width="1" height="1"/><rect x="13" y="199" width="1" height="1"/><rect x="13" y="201" width="1" height="1"/><rect x="13" y="203" width="1" height="1"/><rect x="13" y="205" width="1" height="1"/><rect x="13" y="207" width="1" height="1"/><rect x="13" y="209" width="1" height="1"/><rect x="13" y="211" width="1" height="1"/><rect x="13" y="213" width="1" height="1"/><rect x="13" y="215" width="1" height="1"/><rect x="13" y="217" width="1" height="1"/><rect x="13" y="219" width="1" height="1"/><rect x="13" y="221" width="1" height="1"/><rect x="13" y="223" width="1" height="1"/><rect x="13" y="225" width="1" height="1"/><rect x="13" y="227" width="1" height="1"/><rect x="13" y="229" width="1" height="1"/><rect x="13" y="231" width="1" height="1"/><rect x="13" y="233" width="1" height="1"/><rect x="13" y="235" width="1" height="1"/><rect x="13" y="237" width="1" height="1"/><rect x="13" y="239" width="1" height="1"/><rect x="13" y="241" width="1" height="1"/><rect x="13" y="243" width="1" height="1"/><rect x="13" y="245" width="1" height="1"/><rect x="13" y="247" width="1" height="1"/><rect x="13" y="249" width="1" height="1"/><rect x="13" y="251" width="1" height="1"/></g><g fill="#333"><rect x="15" y="162" width="1" height="1"/><rect x="17" y="162" width="1" height="1"/><rect x="19" y="162" width="1" height="1"/><rect x="21" y="162" width="1" height="1"/></g><g fill="#333"><rect x="15" y="180" width="1" height="1"/><rect x="17" y="180" width="1" height="1"/><rect x="19" y="180" width="1" height="1"/><rect x="21" y="180" width="1" height="1"/></g><g fill="#333"><rect x="15" y="198" width="1" height="1"/><rect x="17" y="198" width="1" height="1"/><rect x="19" y="198" width="1" height="1"/><rect x="21" y="198" width="1" height="1"/></g><g fill="#333"><rect x="19" y="216" width="1" height="1"/><rect x="21" y="216" width="1" height="1"/></g><g fill="#333"><rect x="15" y="234" width="1" height="1"/><rect x="17" y="234" width="1" height="1"/><rect x="19" y="234" width="1" height="1"/><rect x="21" y="234" width="1" height="1"/></g><g fill="#333"><rect x="19" y="252" width="1" height="1"/><rect x="21" y="252" width="1" height="1"/></g><rect x="9.5" y="212.5" width="8" height="8" fill="#fff" stroke="#a0a0a0" stroke-width="1"/><path d="M11.5 216.5H15.5M13.5 214.5V218.5" stroke="#2b4c8c" stroke-width="1"/><rect x="9.5" y="248.5" width="8" height="8" fill="#fff" stroke="#a0a0a0" stroke-width="1"/><path d="M11.5 252.5H15.5M13.5 250.5V254.5" stroke="#2b4c8c" stroke-width="1"/><path d="M24.6 156.6H31L33.5 159.1V167.4H24.6Z" fill="#fff" stroke="#222" stroke-width="1.2"/><path d="M30.5 156L34 159.5H30.5Z" fill="#222"/><path d="M26.5 159.5H29M26.5 161.5H31.5M26.5 163.5H31.5M26.5 165.5H31.5" stroke="#222" stroke-width="1"/><path d="M24.6 174.6H31L33.5 177.1V185.4H24.6Z" fill="#fff" stroke="#222" stroke-width="1.2"/><path d="M30.5 174L34 177.5H30.5Z" fill="#222"/><path d="M26.5 177.5H29M26.5 179.5H31.5M26.5 181.5H31.5M26.5 183.5H31.5" stroke="#222" stroke-width="1"/><path d="M24.6 192.6H31L33.5 195.1V203.4H24.6Z" fill="#fff" stroke="#222" stroke-width="1.2"/><path d="M30.5 192L34 195.5H30.5Z" fill="#222"/><path d="M26.5 195.5H29M26.5 197.5H31.5M26.5 199.5H31.5M26.5 201.5H31.5" stroke="#222" stroke-width="1"/><path d="M28.5 209.7L33.8 212.6V218.9L28.5 221.8L23.2 218.9V212.6ZM23.4 212.7L28.5 215.6L33.6 212.7M28.5 215.6V221.6" fill="#fff" stroke="#333" stroke-width="1.1"/><path d="M28.5 227.7L33.8 230.6V236.9L28.5 239.8L23.2 236.9V230.6ZM23.4 230.7L28.5 233.6L33.6 230.7M28.5 233.6V239.6" fill="#fff" stroke="#333" stroke-width="1.1"/><path d="M28.5 245.7L33.8 248.6V254.9L28.5 257.8L23.2 254.9V248.6ZM23.4 248.7L28.5 251.6L33.6 248.7M28.5 251.6V257.6" fill="#fff" stroke="#333" stroke-width="1.1"/></svg>

<div id="popup" class="a">
<div id="sel" class="a"></div>
<div class="pi" style="top:5px;color:#1e1e1e">WriteFormulaNumWithFormat</div><div class="pi" style="top:24px;color:#1e1e1e">WriteFormulaStr</div><div class="pi" style="top:43px;color:#1e1e1e">WriteFormulaStrWithFormat</div><div class="pi" style="top:62px;color:#1e1e1e">WriteFormulaWithFormat</div><div class="pi" style="top:81px;color:#1e1e1e">WriteNumber</div><div class="pi" style="top:100px;color:#1e1e1e">WriteNumberWithFormat</div><div class="pi" style="top:119px;color:#fff">WriteString</div><div class="pi" style="top:138px;color:#1e1e1e">WriteStringWithFormat</div><div class="pi" style="top:157px;color:#1e1e1e">ZoomIn</div><div class="pi" style="top:176px;color:#1e1e1e">ZoomOut</div>
<div id="sb" class="a"><div id="thumb" class="a"></div></div>
</div>
<svg class="a" style="left:0;top:0;z-index:6" width="1014" height="606" viewBox="0 0 1014 606"><path d="M290 403.5H295.5M290 405.5H295.5M290 407.5H295.5" stroke="#c4c4b4" stroke-width=".8"/><path d="M300.5 400.0L305 404.0L301.3 406.8L297 403.6Z" fill="#e48ce6"/><path d="M297 403.6L301.3 406.8L301.5 411.1L297 406.7Z" fill="#a646b2"/><path d="M301.3 406.8L305 404.0V407.7L301.5 411.1Z" fill="#7d3290"/><path d="M290 422.5H295.5M290 424.5H295.5M290 426.5H295.5" stroke="#c4c4b4" stroke-width=".8"/><path d="M300.5 419.0L305 423.0L301.3 425.8L297 422.6Z" fill="#e48ce6"/><path d="M297 422.6L301.3 425.8L301.5 430.1L297 425.7Z" fill="#a646b2"/><path d="M301.3 425.8L305 423.0V426.7L301.5 430.1Z" fill="#7d3290"/><path d="M290 441.5H295.5M290 443.5H295.5M290 445.5H295.5" stroke="#c4c4b4" stroke-width=".8"/><path d="M300.5 438.0L305 442.0L301.3 444.8L297 441.6Z" fill="#e48ce6"/><path d="M297 441.6L301.3 444.8L301.5 449.1L297 444.7Z" fill="#a646b2"/><path d="M301.3 444.8L305 442.0V445.7L301.5 449.1Z" fill="#7d3290"/><path d="M290 460.5H295.5M290 462.5H295.5M290 464.5H295.5" stroke="#c4c4b4" stroke-width=".8"/><path d="M300.5 457.0L305 461.0L301.3 463.8L297 460.6Z" fill="#e48ce6"/><path d="M297 460.6L301.3 463.8L301.5 468.1L297 463.7Z" fill="#a646b2"/><path d="M301.3 463.8L305 461.0V464.7L301.5 468.1Z" fill="#7d3290"/><path d="M290 479.5H295.5M290 481.5H295.5M290 483.5H295.5" stroke="#c4c4b4" stroke-width=".8"/><path d="M300.5 476.0L305 480.0L301.3 482.8L297 479.6Z" fill="#e48ce6"/><path d="M297 479.6L301.3 482.8L301.5 487.1L297 482.7Z" fill="#a646b2"/><path d="M301.3 482.8L305 480.0V483.7L301.5 487.1Z" fill="#7d3290"/><path d="M290 498.5H295.5M290 500.5H295.5M290 502.5H295.5" stroke="#c4c4b4" stroke-width=".8"/><path d="M300.5 495.0L305 499.0L301.3 501.8L297 498.6Z" fill="#e48ce6"/><path d="M297 498.6L301.3 501.8L301.5 506.1L297 501.7Z" fill="#a646b2"/><path d="M301.3 501.8L305 499.0V502.7L301.5 506.1Z" fill="#7d3290"/><path d="M290 517.5H295.5M290 519.5H295.5M290 521.5H295.5" stroke="#c4c4b4" stroke-width=".8"/><path d="M300.5 514.0L305 518.0L301.3 520.8L297 517.6Z" fill="#e48ce6"/><path d="M297 517.6L301.3 520.8L301.5 525.1L297 520.7Z" fill="#a646b2"/><path d="M301.3 520.8L305 518.0V521.7L301.5 525.1Z" fill="#7d3290"/><path d="M290 536.5H295.5M290 538.5H295.5M290 540.5H295.5" stroke="#c4c4b4" stroke-width=".8"/><path d="M300.5 533.0L305 537.0L301.3 539.8L297 536.6Z" fill="#e48ce6"/><path d="M297 536.6L301.3 539.8L301.5 544.1L297 539.7Z" fill="#a646b2"/><path d="M301.3 539.8L305 537.0V540.7L301.5 544.1Z" fill="#7d3290"/><path d="M290 555.5H295.5M290 557.5H295.5M290 559.5H295.5" stroke="#c4c4b4" stroke-width=".8"/><path d="M300.5 552.0L305 556.0L301.3 558.8L297 555.6Z" fill="#e48ce6"/><path d="M297 555.6L301.3 558.8L301.5 563.1L297 558.7Z" fill="#a646b2"/><path d="M301.3 558.8L305 556.0V559.7L301.5 563.1Z" fill="#7d3290"/><path d="M290 574.5H295.5M290 576.5H295.5M290 578.5H295.5" stroke="#c4c4b4" stroke-width=".8"/><path d="M300.5 571.0L305 575.0L301.3 577.8L297 574.6Z" fill="#e48ce6"/><path d="M297 574.6L301.3 577.8L301.5 582.1L297 577.7Z" fill="#a646b2"/><path d="M301.3 577.8L305 575.0V578.7L301.5 582.1Z" fill="#7d3290"/><path d="M522.5 408L526.5 404L530.5 408" fill="none" stroke="#505050" stroke-width="2"/><path d="M522.5 577L526.5 581L530.5 577" fill="none" stroke="#505050" stroke-width="2"/></svg>
</body></html>
